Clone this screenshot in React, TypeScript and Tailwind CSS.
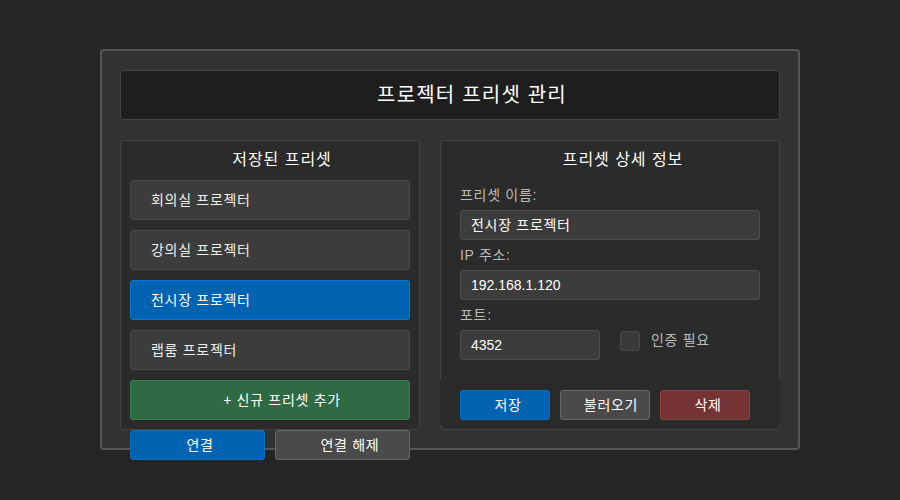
const presets = ["회의실 프로젝터", "강의실 프로젝터", "전시장 프로젝터", "랩룸 프로젝터"];

function Field({ label }: { label: string }) {
  return (
    <div className="flex h-[30px] items-center text-[14px] tracking-[0.05em] text-[#bbbbbb]">{label}</div>
  );
}

function TextBox({ value, className = "" }: { value: string; className?: string }) {
  return (
    <div
      className={`flex h-[30px] items-center rounded-[3px] border border-[#4e4e4e] bg-[#3c3c3c] px-[10px] text-[14px] text-white ${className}`}
    >
      {value}
    </div>
  );
}

export default function App() {
  const selected = 2;

  return (
    <div
      className="min-h-[500px] bg-[#252525] pt-[49px]"
      style={{ fontFamily: '"Liberation Sans", "Noto Sans CJK KR", sans-serif' }}
    >
      <div className="mx-auto h-[401px] w-[700px] rounded-[4px] border-2 border-[#555555] bg-[#323232] px-[18px] pt-[19px]">
        {/* 제목 */}
        <div className="flex h-[50px] items-center justify-center rounded-[3px] border border-[#444444] bg-[#1e1e1e] pl-[44px] text-[20px] tracking-[0.06em] text-white">
          프로젝터 프리셋 관리
        </div>

        <div className="mt-5 flex gap-5">
          {/* 저장된 프리셋 */}
          <div className="w-[300px]">
            <div className="flex h-[290px] flex-col gap-[10px] rounded-[3px] border border-[#444444] bg-[#2b2b2b] px-[9px] pt-[9px]">
              <div className="flex h-5 items-center justify-center pl-6 text-[16px] tracking-[0.06em] text-white">
                저장된 프리셋
              </div>
              {presets.map((name, i) => (
                <div
                  key={name}
                  className={
                    i === selected
                      ? "flex h-10 items-center rounded-[3px] border border-[#0a78d4] bg-[#0063b1] pl-5 text-[14px] tracking-[0.05em] text-white"
                      : "flex h-10 items-center rounded-[3px] border border-[#4a4a4a] bg-[#3c3c3c] pl-5 text-[14px] tracking-[0.05em] text-[#eeeeee]"
                  }
                >
                  {name}
                </div>
              ))}
              <div className="flex h-10 items-center justify-center rounded-[3px] border border-[#3c7a50] bg-[#2e6a44] pl-6 text-[14px] tracking-[0.05em] text-white">
                + 신규 프리셋 추가
              </div>
            </div>
            <div className="flex gap-[10px] px-[10px]">
              <button className="h-[30px] w-[135px] rounded-[3px] border border-[#0a6fc2] bg-[#0063b1] pl-[5px] text-[14px] tracking-[0.05em] text-white">
                연결
              </button>
              <button className="h-[30px] w-[135px] rounded-[3px] border border-[#666666] bg-[#4a4a4a] pl-[15px] text-[14px] tracking-[0.05em] text-white">
                연결 해제
              </button>
            </div>
          </div>

          {/* 프리셋 상세 정보 */}
          <div className="flex h-[290px] w-[340px] flex-col rounded-[3px] border border-[#444444] bg-[#2b2b2b]">
            <div className="flex-1 px-[19px] pt-[9px]">
              <div className="mb-[10px] flex h-5 items-center justify-center pl-[26px] text-[16px] tracking-[0.06em] text-white">
                프리셋 상세 정보
              </div>
              <Field label="프리셋 이름:" />
              <TextBox value="전시장 프로젝터" className="tracking-[0.05em]" />
              <Field label="IP 주소:" />
              <TextBox value="192.168.1.120" />
              <Field label="포트:" />
              <div className="flex items-start gap-5">
                <TextBox value="4352" className="w-[140px]" />
                <div className="flex items-center gap-[11px]">
                  <div className="h-5 w-5 rounded-[3px] border border-[#4a4a4a] bg-[#3a3a3a]" />
                  <span className="text-[14px] tracking-[0.05em] text-[#bbbbbb]">인증 필요</span>
                </div>
              </div>
            </div>
            <div className="-mx-px mb-1 flex h-[45px] gap-[10px] bg-[#2a2a2a] px-5 pt-[10px]">
              <button className="h-[30px] w-[90px] rounded-[3px] border border-[#0a6fc2] bg-[#0063b1] pl-[6px] text-[14px] tracking-[0.05em] text-white">
                저장
              </button>
              <button className="h-[30px] w-[90px] rounded-[3px] border border-[#666666] bg-[#4a4a4a] pl-3 text-[14px] tracking-[0.05em] text-white">
                불러오기
              </button>
              <button className="h-[30px] w-[90px] rounded-[3px] border border-[#8a4444] bg-[#763333] pl-[6px] text-[14px] tracking-[0.05em] text-white">
                삭제
              </button>
            </div>
          </div>
        </div>
      </div>
    </div>
  );
}
